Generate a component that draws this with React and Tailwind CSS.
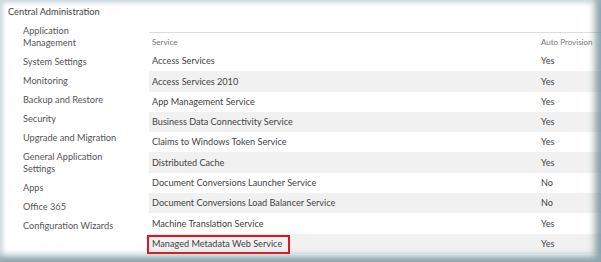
import React from "react";

const navItems = [
  "Application Management",
  "System Settings",
  "Monitoring",
  "Backup and Restore",
  "Security",
  "Upgrade and Migration",
  "General Application Settings",
  "Apps",
  "Office 365",
  "Configuration Wizards",
];

const services = [
  { name: "Access Services", auto: "Yes" },
  { name: "Access Services 2010", auto: "Yes" },
  { name: "App Management Service", auto: "Yes" },
  { name: "Business Data Connectivity Service", auto: "Yes" },
  { name: "Claims to Windows Token Service", auto: "Yes" },
  { name: "Distributed Cache", auto: "Yes" },
  { name: "Document Conversions Launcher Service", auto: "No" },
  { name: "Document Conversions Load Balancer Service", auto: "No" },
  { name: "Machine Translation Service", auto: "Yes" },
  { name: "Managed Metadata Web Service", auto: "Yes", highlight: true },
];

const App = () => {
  return (
    <div
      className="relative w-[601px] h-[262px] overflow-hidden bg-white text-[#444]"
      style={{ fontFamily: 'Lato, "Open Sans", sans-serif' }}
    >
      <div className="pl-[8px] pt-[5px] text-[9.3px] leading-[14px] text-[#444]">
        Central Administration
      </div>

      <div className="flex">
        {/* left nav */}
        <div className="w-[149px] shrink-0 pl-[23px] pt-[6px] flex flex-col gap-[7px] text-[9.2px] leading-[12px] text-[#555]">
          {navItems.map((label) => (
            <div key={label} className="w-[98px]">
              {label}
            </div>
          ))}
        </div>

        {/* services table */}
        <div className="flex-1 mt-[13px] border-t border-[#dcdcdc]">
          <div className="flex items-center h-[18px] text-[8px] text-[#777]">
            <div className="flex-1 pl-[3px]">Service</div>
            <div className="w-[60px]">Auto Provision</div>
          </div>
          {services.map((s, i) => (
            <div
              key={s.name}
              className={`flex items-center h-[20.3px] text-[9.15px] ${
                i % 2 === 1 ? "bg-[#f1f1f1]" : "bg-white"
              }`}
            >
              <div className="relative flex-1 self-stretch flex items-center pl-[3px]">
                {s.name}
                {s.highlight && (
                  <span className="absolute -left-[2px] top-[1px] w-[143px] h-[19px] border-2 border-[#e0141e]" />
                )}
              </div>
              <div className="w-[60px]">{s.auto}</div>
            </div>
          ))}
        </div>
      </div>

      {/* screenshot frame shadow */}
      <div className="pointer-events-none absolute inset-0 shadow-[inset_3px_3px_4px_rgba(160,180,190,0.5),inset_-7px_-7px_7px_-1px_rgba(90,125,135,0.7)]" />
    </div>
  );
};

export default App;
